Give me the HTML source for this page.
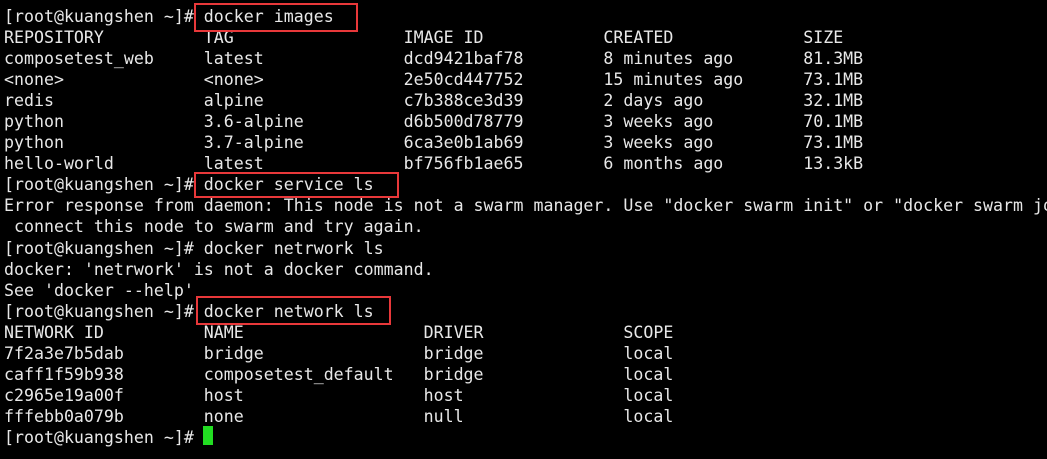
<!DOCTYPE html>
<html><head><meta charset="utf-8"><style>
html,body{margin:0;padding:0;background:#000;width:1047px;height:459px;overflow:hidden}
pre{position:absolute;left:4px;top:6px;margin:0;font-family:"DejaVu Sans Mono","Liberation Mono",monospace;font-size:16.6px;line-height:21.05px;color:#e8e8e8;white-space:pre}
.b{position:absolute;border:2px solid #e8383a;box-sizing:border-box}
.cur{position:absolute;left:203px;top:426px;width:10px;height:19px;background:#22dd22}
</style></head><body>
<pre>[root@kuangshen ~]# docker images
REPOSITORY          TAG                 IMAGE ID            CREATED             SIZE
composetest_web     latest              dcd9421baf78        8 minutes ago       81.3MB
&lt;none&gt;              &lt;none&gt;              2e50cd447752        15 minutes ago      73.1MB
redis               alpine              c7b388ce3d39        2 days ago          32.1MB
python              3.6-alpine          d6b500d78779        3 weeks ago         70.1MB
python              3.7-alpine          6ca3e0b1ab69        3 weeks ago         73.1MB
hello-world         latest              bf756fb1ae65        6 months ago        13.3kB
[root@kuangshen ~]# docker service ls
Error response from daemon: This node is not a swarm manager. Use "docker swarm init" or "docker swarm jo
 connect this node to swarm and try again.
[root@kuangshen ~]# docker netrwork ls
docker: 'netrwork' is not a docker command.
See 'docker --help'
[root@kuangshen ~]# docker network ls
NETWORK ID          NAME                  DRIVER              SCOPE
7f2a3e7b5dab        bridge                bridge              local
caff1f59b938        composetest_default   bridge              local
c2965e19a00f        host                  host                local
fffebb0a079b        none                  null                local
[root@kuangshen ~]# </pre>
<div class="b" style="left:194px;top:3px;width:164px;height:29px"></div>
<div class="b" style="left:194px;top:172px;width:205px;height:26px"></div>
<div class="b" style="left:196px;top:296px;width:195px;height:29px"></div>
<div class="cur"></div>
</body></html>
